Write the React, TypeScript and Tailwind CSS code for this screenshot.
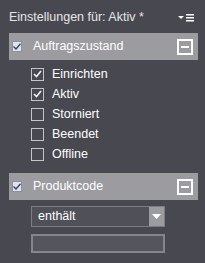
import React from 'react';

const font = { fontFamily: '"Liberation Sans", Arial, sans-serif' };

function SmallCheck() {
  return (
    <div className="w-[10px] h-[11px] bg-[#dfe3ee] border border-[#8c8fa0] flex items-center justify-center">
      <svg width="8" height="7" viewBox="0 0 8 7">
        <path d="M0.5 3.5 L3 6 L7.5 0.8" fill="none" stroke="#3a3d50" strokeWidth="1.3" />
      </svg>
    </div>
  );
}

function Box({ checked }: { checked: boolean }) {
  return (
    <div className="w-[13px] h-[13px] border border-[#c4c4c8] flex items-center justify-center">
      {checked && (
        <svg width="9" height="8" viewBox="0 0 9 8">
          <path d="M1 4 L3.5 6.5 L8 1" fill="none" stroke="#f2f2f2" strokeWidth="1.6" />
        </svg>
      )}
    </div>
  );
}

function SectionHeader({ label }: { label: string }) {
  return (
    <div className="ml-[9px] w-[189px] h-[27px] bg-[#9b9ba0] flex items-center">
      <div className="ml-[3px]">
        <SmallCheck />
      </div>
      <span className="ml-[11px] text-[12.5px] text-white flex-1">{label}</span>
      <div className="mr-[5px] w-[16px] h-[16px] border-2 border-white flex items-center justify-center">
        <div className="w-[8px] h-[2px] bg-white" />
      </div>
    </div>
  );
}

export default function App() {
  const states = [
    { name: 'Einrichten', checked: true },
    { name: 'Aktiv', checked: true },
    { name: 'Storniert', checked: false },
    { name: 'Beendet', checked: false },
    { name: 'Offline', checked: false },
  ];

  return (
    <div className="w-[205px] h-[263px] bg-[#484950] overflow-hidden flex flex-col" style={font}>
      <div className="h-[33px] pl-[9px] pr-[11px] flex items-center justify-between pt-[2px]">
        <span className="text-[12.5px] text-[#e6e6e8]">Einstellungen für: Aktiv *</span>
        <svg width="16" height="8" viewBox="0 0 16 8">
          <path d="M0 2 L6 2 L3 5 Z" fill="#ffffff" />
          <rect x="8" y="0" width="8" height="1.5" fill="#ffffff" />
          <rect x="8" y="3" width="8" height="1.5" fill="#ffffff" />
          <rect x="8" y="6" width="8" height="1.5" fill="#ffffff" />
        </svg>
      </div>

      <SectionHeader label="Auftragszustand" />

      <div className="pt-[4px] pl-[31px] flex flex-col">
        {states.map((s) => (
          <div key={s.name} className="h-[20px] flex items-center">
            <Box checked={s.checked} />
            <span className="ml-[8px] text-[12.5px] text-white">{s.name}</span>
          </div>
        ))}
      </div>

      <div className="mt-[9px]">
        <SectionHeader label="Produktcode" />
      </div>

      <div className="pl-[31px] pt-[6px] flex flex-col gap-[7px]">
        <div className="w-[134px] h-[21px] border border-[#7c7d84] bg-[#4f5058] flex">
          <span className="flex-1 pl-[6px] text-[12.5px] text-white leading-[19px]">enthält</span>
          <div className="w-[15px] bg-[#9b9ba0] flex items-center justify-center">
            <svg width="9" height="5" viewBox="0 0 9 5">
              <path d="M0 0 L9 0 L4.5 5 Z" fill="#ffffff" />
            </svg>
          </div>
        </div>
        <div className="w-[134px] h-[19px] border-2 border-[#85868c] bg-[#54555d]" />
      </div>
    </div>
  );
}
